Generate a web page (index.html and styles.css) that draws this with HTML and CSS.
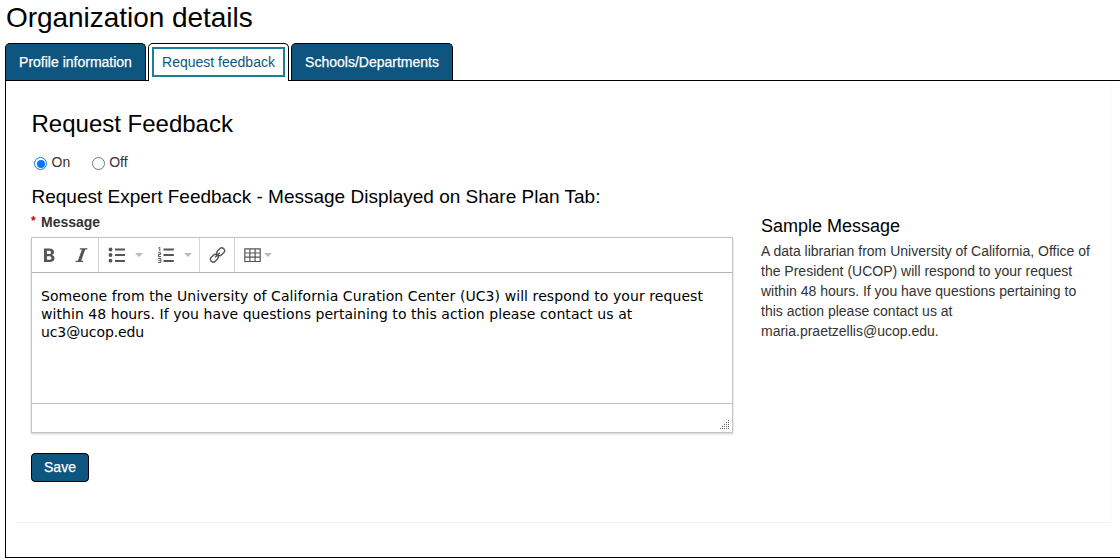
FILE: index.html
```html
<!DOCTYPE html>
<html lang="en">
<head>
<meta charset="utf-8">
<title>Organization details</title>
<link rel="stylesheet" href="styles.css">
</head>
<body>
<h1 class="page-title">Organization details</h1>
<nav class="tabs">
  <a class="tab tab-profile">Profile information</a>
  <a class="tab tab-active"><span class="tab-focus">Request feedback</span></a>
  <a class="tab tab-schools">Schools/Departments</a>
</nav>
<main class="panel">
  <div class="panel-body">
    <section class="form">
      <h2 class="title">Request Feedback</h2>
      <div class="radios">
        <label class="radio"><span class="dot dot-on"></span>On</label>
        <label class="radio"><span class="dot"></span>Off</label>
      </div>
      <h3 class="subtitle">Request Expert Feedback - Message Displayed on Share Plan Tab:</h3>
      <div class="label"><span class="required">*</span>Message</div>
      <div class="editor">
        <div class="toolbar">
          <svg width="700" height="34" viewBox="32 238 700 34" fill="#555">
            <path d="M98.500 238v34M199.500 238v34M234.500 238v34" stroke="#d3d3d3"/>
            <path fill-rule="evenodd" d="M44 248.500h5.300c3 0 4.700 1.200 4.700 3.500 0 1.500-.8 2.500-2.100 3 1.700.4 2.600 1.500 2.600 3.200 0 2.500-1.800 3.800-4.900 3.800H44zm2.900 2.200v3.400h2.100c1.300 0 2-.6 2-1.700s-.7-1.700-2-1.700zm0 5.500v3.600h2.300c1.500 0 2.200-.6 2.200-1.800s-.7-1.800-2.200-1.800z"/>
            <path d="M80 248.300h7.500l-.3 1.200h-2l-4 11.300h2.100l-.4 1.200h-7.400l.4-1.200h2l4-11.300h-2.200z"/>
            <circle cx="110.500" cy="249.500" r="1.900"/><circle cx="110.500" cy="255" r="1.900"/><circle cx="110.500" cy="260.700" r="1.900"/>
            <path d="M115 248.500h10v2h-10zM115 254h10v2h-10zM115 260h10v2h-10z"/>
            <path d="M163.500 248.500h10.300v2h-10.300zM163.500 254h10.300v2h-10.300zM163.500 260h10.300v2h-10.300z"/>
            <path d="M158.500 248l1.300-.7v4M158 252.800h2.700v1.700h-2.300v2h2.600M158 258.500h2.800v3.900H158M158.500 260.400h2" fill="none" stroke="#555" stroke-width="1"/>
            <path d="M135 253h8l-4 4zM184 253h8l-4 4zM264 253h8l-4 4z" fill="#b5bdc4"/>
            <g transform="rotate(-45 217.500 255)" fill="none" stroke="#555" stroke-width="1.400">
              <rect x="208.700" y="252.200" width="8.600" height="5.600" rx="2.800"/>
              <rect x="217.700" y="252.200" width="8.600" height="5.600" rx="2.800"/>
              <path d="M214.200 255h6.600"/>
            </g>
            <path d="M244.800 248.800h15.400v12.700h-15.400zM244.800 253h15.400M244.800 257.200h15.400M249.900 248.800v12.700M255.100 248.800v12.700" fill="none" stroke="#555" stroke-width="1.200"/>
          </svg>
        </div>
        <div class="editor-text"><span class="line-wide">Someone from the University of California Curation Center (UC3) will respond to your request</span><br><span class="line-mid">within 48 hours. If you have questions pertaining to this action please contact us at</span><br><span class="line-tight">uc3@ucop.edu</span></div>
        <div class="statusbar">
          <svg width="10" height="10" viewBox="0 0 10 10" stroke="#666" stroke-dasharray="1 1"><path d="M8 .5h2M6 2.500h4M4 4.500h6M2 6.500h8M0 8.500h10"/></svg>
        </div>
      </div>
      <button class="save">Save</button>
    </section>
    <aside class="sample">
      <h4 class="sample-title">Sample Message</h4>
      <p class="sample-text">A data librarian from University of California, Office of<br>the President (UCOP) will respond to your request<br>within 48 hours. If you have questions pertaining to<br>this action please contact us at<br>maria.praetzellis@ucop.edu.</p>
    </aside>
  </div>
</main>
</body>
</html>
```
FILE: styles.css
```css
* { box-sizing: border-box; }
body { margin: 0; height: 560px; overflow: hidden; background: #fff; color: #333; font: 14px/20px "Liberation Sans", Arial, sans-serif; white-space: nowrap; }
h1, h2, h3, h4, p { margin: 0; color: #000; font-weight: 400; }
.page-title { height: 43px; padding: 2px 0 0 6px; font-size: 28px; line-height: 32px; letter-spacing: -.04px; }
.tabs { display: flex; gap: 2px; height: 37px; margin-left: 5px; }
.tab { display: flex; align-items: center; justify-content: center; height: 37px; width: 141px; border: 1px solid #000; border-bottom: 0; border-radius: 5px 5px 0 0; background: #0e5680; color: #fff; -webkit-text-stroke: .25px currentColor; }
.tab-active { position: relative; height: 38px; padding: 3px; background: #fff; color: #0e5680; -webkit-text-stroke: 0; }
.tab-focus { display: flex; align-items: center; justify-content: center; width: 133px; height: 30px; margin-bottom: 1px; border: 2px solid #17809a; }
.tab-schools { width: 162px; }
.panel { width: 1130px; height: 478px; margin-left: 5px; padding: 0 0 0 10px; border: 1px solid #000; }
.panel-body { display: flex; width: 1096px; height: 442px; padding: 0 0 0 15px; border-right: 1px solid #fbfbfb; border-bottom: 1px solid #f1f1f1; }
.form { width: 702px; padding-top: 28px; }
.title { padding-left: .5px; font-size: 24px; line-height: 30px; }
.radios { display: flex; gap: 22px; height: 20px; margin-top: 13px; padding-left: 3px; }
.radio { display: flex; gap: 4.500px; }
.radio + .radio { margin-left: -.5px; }
.dot { width: 13px; height: 13px; margin-top: 5px; border: 1px solid #777; border-radius: 50%; }
.dot-on { border: 1px solid #0a75ff; padding: 1.500px; background: #0a75ff content-box; }
.subtitle { margin-top: 13px; padding-left: .5px; font-size: 19px; line-height: 24px; }
.label { display: flex; gap: 5px; height: 20px; margin-top: 3px; font-weight: 700; }
.required { width: 5px; color: #c00; font-size: 12px; line-height: 19px; }
.editor { width: 702px; height: 196px; margin-top: 5px; border: 1px solid #c2c2c2; box-shadow: 0 1px 2px rgba(0,0,0,.2); }
.toolbar { height: 35px; border-bottom: 1px solid #b5b5b5; }
.toolbar svg { display: block; }
.editor-text { height: 130px; padding: 14px 9px; color: #000; font: 14px/18px "DejaVu Sans", Verdana, sans-serif; }
.line-wide { letter-spacing: .077px; }
.line-mid { letter-spacing: .06px; }
.line-tight { letter-spacing: -.1px; }
.statusbar { display: flex; align-items: flex-end; justify-content: flex-end; height: 29px; padding: 0 2px 2px 0; border-top: 1px solid #c2c2c2; }
.save { display: block; width: 58px; height: 29px; margin-top: 20px; padding: 0 0 2px; border: 1px solid #000; border-radius: 4px; background: #0e5680; color: #fff; font: 14px/20px "Liberation Sans", Arial, sans-serif; -webkit-text-stroke: .25px #fff; }
.sample { padding: 133px 0 0 28px; }
.sample-title { font-size: 18px; line-height: 24px; }
.sample-text { margin-top: 3px; color: #333; }
```
